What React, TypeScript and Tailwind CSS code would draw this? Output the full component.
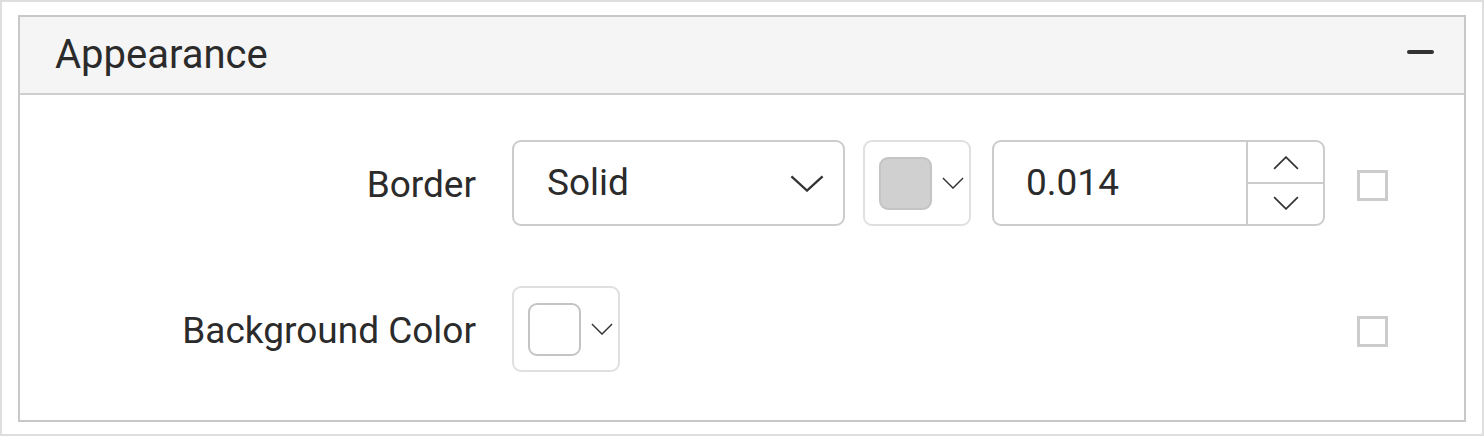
import type { ReactNode } from 'react';

function Chevron({ up, className }: { up?: boolean; className: string }) {
  return (
    <svg viewBox="0 0 24 12" className={className} fill="none" stroke="#333" strokeWidth="1.6" preserveAspectRatio="none">
      {up ? <path d="M1 11L12 1L23 11" /> : <path d="M1 1L12 11L23 1" />}
    </svg>
  );
}

function ColorPicker({ swatch }: { swatch: string }) {
  return (
    <div className="flex h-[86px] w-[108px] items-center rounded-[9px] border-2 border-[#e0e0e0] bg-white pl-[14px]">
      <div className={`h-[53px] w-[53px] rounded-[9px] border-2 border-[#c4c4c4] ${swatch}`} />
      <Chevron className="ml-[10px] h-[12px] w-[22px]" />
    </div>
  );
}

function Checkbox() {
  return <div className="h-[31px] w-[31px] border-[3px] border-[#cccccc] bg-white" />;
}

function Row({ label, children }: { label: string; children: ReactNode }) {
  return (
    <div className="flex h-[86px] items-center">
      <div className="w-[456px] pt-[4px] text-right text-[37px] text-[#2b2b2b]">{label}</div>
      <div className="ml-[36px] flex w-[813px] items-center">{children}</div>
      <div className="ml-[32px] pt-[4px]">
        <Checkbox />
      </div>
    </div>
  );
}

export default function App() {
  return (
    <div
      className="h-[436px] w-[1484px] border-2 border-[#dedede] bg-white pb-[12px] pl-[16px] pr-[16px] pt-[13px]"
      style={{ fontFamily: 'Roboto, "Noto Sans", sans-serif' }}
    >
      <div className="flex h-full flex-col border-2 border-[#c8c8c8]">
        <div className="flex h-[78px] items-center justify-between border-b-2 border-[#cfcfcf] bg-[#f5f5f5] pl-[35px] pr-[30px]">
          <span className="text-[40px] leading-none text-[#2b2b2b]">Appearance</span>
          <span className="mb-[6px] block h-[4px] w-[27px] rounded-full bg-[#333]" />
        </div>
        <div className="flex flex-col gap-[60px] pt-[45px]">
          <Row label="Border">
            <div className="flex h-[86px] w-[333px] items-center justify-between rounded-[9px] border-2 border-[#cccccc] bg-white pl-[33px] pr-[19px]">
              <span className="text-[37px] text-[#2b2b2b]">Solid</span>
              <Chevron className="h-[17px] w-[34px]" />
            </div>
            <div className="ml-[18px]">
              <ColorPicker swatch="bg-[#d0d0d0]" />
            </div>
            <div className="ml-[21px] flex h-[86px] w-[333px] rounded-[9px] border-2 border-[#cccccc] bg-white">
              <div className="flex flex-1 items-center pl-[32px] text-[37px] text-[#2b2b2b]">0.014</div>
              <div className="flex w-[77px] flex-col border-l-2 border-[#cccccc]">
                <div className="flex flex-1 items-center justify-center border-b-2 border-[#cccccc] pt-[2px]">
                  <Chevron up className="h-[14px] w-[26px]" />
                </div>
                <div className="flex flex-1 items-center justify-center pb-[2px]">
                  <Chevron className="h-[14px] w-[26px]" />
                </div>
              </div>
            </div>
          </Row>
          <Row label="Background Color">
            <ColorPicker swatch="bg-white" />
          </Row>
        </div>
      </div>
    </div>
  );
}
